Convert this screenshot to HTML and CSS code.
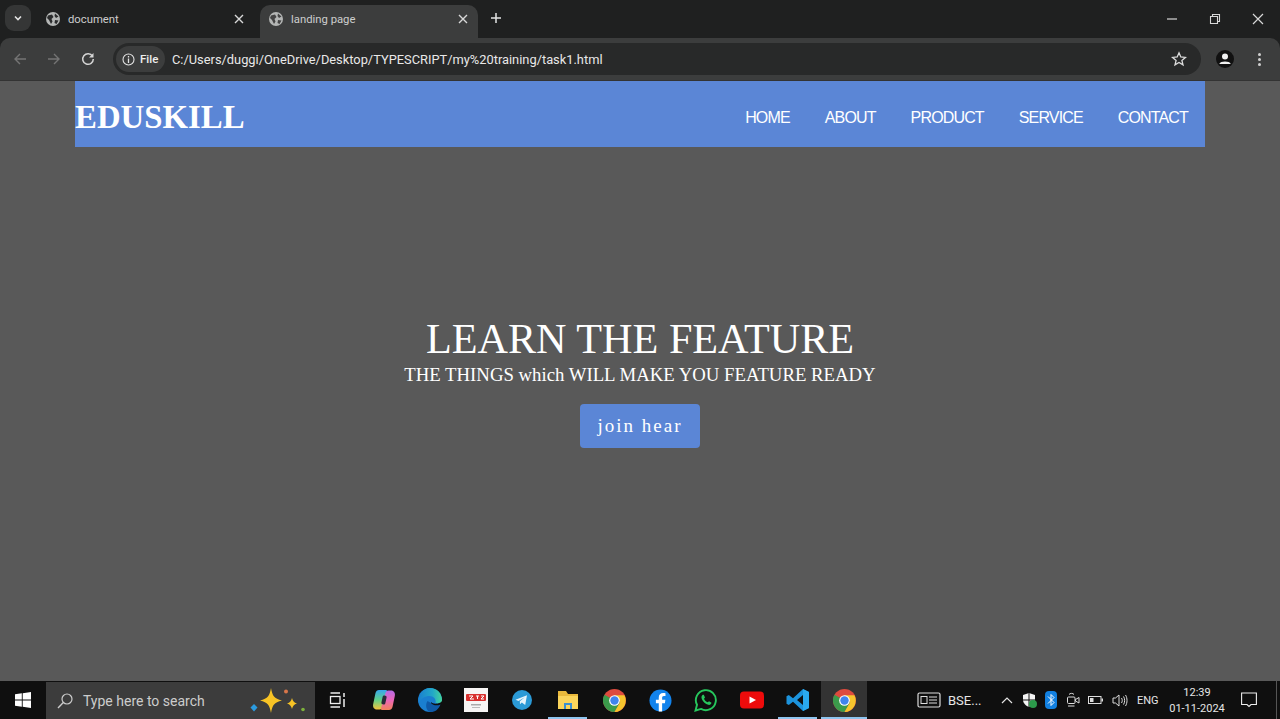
FILE: index.html
```html
<!DOCTYPE html>
<html lang="en">
<head>
  <meta charset="UTF-8" />
  <meta name="viewport" content="width=device-width, initial-scale=1.0" />
  <title>landing page</title>
  <link rel="stylesheet" href="styles.css">
</head>
<body>
  <div class="browser-top">
    <div class="tabstrip">
      <div class="tab-menu">
        <svg width="10" height="10" viewBox="0 0 10 10"><path d="M2 3.500 5 6.500 8 3.500" fill="none" stroke="#e3e3e3" stroke-width="1.600"/></svg>
      </div>
      <div class="tab">
        <svg class="globe" width="14" height="14" viewBox="0 0 14 14"><circle cx="7" cy="7" r="7" fill="#b4b6b5"/><path d="M2 3.500 6 2.500 7.500 5 5.500 7 6.500 9.500 5 12 3 8 1 6ZM9 1.500 12.500 4.500 10 6 8.500 4ZM9 8 12.500 8.500 10.500 12 8.500 11Z" fill="#2a2b2c"/></svg>
        <span class="tab-title">document</span>
        <svg class="tab-close" width="10" height="10" viewBox="0 0 10 10"><path d="M1 1 9 9M9 1 1 9" stroke="#d8d8d8" stroke-width="1.400"/></svg>
      </div>
      <div class="tab active">
        <svg class="globe" width="14" height="14" viewBox="0 0 14 14"><circle cx="7" cy="7" r="7" fill="#b4b6b5"/><path d="M2 3.500 6 2.500 7.500 5 5.500 7 6.500 9.500 5 12 3 8 1 6ZM9 1.500 12.500 4.500 10 6 8.500 4ZM9 8 12.500 8.500 10.500 12 8.500 11Z" fill="#444"/></svg>
        <span class="tab-title">landing page</span>
        <svg class="tab-close" width="10" height="10" viewBox="0 0 10 10"><path d="M1 1 9 9M9 1 1 9" stroke="#d8d8d8" stroke-width="1.400"/></svg>
      </div>
      <svg class="new-tab" width="12" height="12" viewBox="0 0 12 12"><path d="M6 1V11M1 6H11" stroke="#e3e3e3" stroke-width="1.500"/></svg>
      <div class="window-btns">
        <svg width="12" height="12" viewBox="0 0 12 12"><path d="M1 6H11" stroke="#d8d8d8" stroke-width="1.200"/></svg>
        <svg width="12" height="12" viewBox="0 0 12 12"><path d="M1.500 3.500H8.500V10.500H1.500ZM3.500 3.500V1.500H10.500V8.500H8.500" fill="none" stroke="#d8d8d8" stroke-width="1.100"/></svg>
        <svg width="12" height="12" viewBox="0 0 12 12"><path d="M1 1 11 11M11 1 1 11" stroke="#d8d8d8" stroke-width="1.200"/></svg>
      </div>
    </div>

    <div class="toolbar">
      <div class="nav-btns">
        <svg width="14" height="14" viewBox="0 0 14 14"><path d="M13 7H2M7 2 2 7 7 12" fill="none" stroke="#747474" stroke-width="1.400"/></svg>
        <svg width="14" height="14" viewBox="0 0 14 14"><path d="M1 7H12M7 2 12 7 7 12" fill="none" stroke="#747474" stroke-width="1.400"/></svg>
        <svg width="14" height="14" viewBox="0 0 14 14"><path d="M11.500 4.200A5.300 5.300 0 1 0 12.300 7" fill="none" stroke="#d5d5d5" stroke-width="1.500"/><path d="M12.500 1V5.500H8Z" fill="#d5d5d5"/></svg>
      </div>
      <div class="omnibox">
        <div class="file-chip">
          <svg width="13" height="13" viewBox="0 0 13 13"><circle cx="6.500" cy="6.500" r="5.500" fill="none" stroke="#e3e3e3" stroke-width="1.100"/><path d="M6.500 5.500V10M6.500 3V4.400" stroke="#e3e3e3" stroke-width="1.300"/></svg>
          <span>File</span>
        </div>
        <span class="url">C:/Users/duggi/OneDrive/Desktop/TYPESCRIPT/my%20training/task1.html</span>
        <svg class="star" width="16" height="16" viewBox="0 0 16 16"><path d="M8 1.800 9.800 6 14.400 6.400 10.900 9.400 12 13.900 8 11.500 4 13.900 5.100 9.400 1.600 6.400 6.200 6Z" fill="none" stroke="#dcdcdc" stroke-width="1.300"/></svg>
      </div>
      <div class="profile">
        <svg width="18" height="18" viewBox="0 0 18 18"><circle cx="9" cy="9" r="9" fill="#111"/><circle cx="9" cy="6.500" r="3" fill="#f1f1f1"/><path d="M3.500 13.500C4 10.800 14 10.800 14.500 13.500V14H3.500Z" fill="#f1f1f1"/></svg>
      </div>
      <div class="more-dots"><i></i><i></i><i></i></div>
    </div>
  </div>

  <div class="page">
    <nav class="navbar">
      <div class="logo">EDUSKILL</div>
      <ul class="nav-links">
        <li>HOME</li>
        <li>ABOUT</li>
        <li>PRODUCT</li>
        <li>SERVICE</li>
        <li>CONTACT</li>
      </ul>
    </nav>
    <section class="hero">
      <h1>LEARN THE FEATURE</h1>
      <p>THE THINGS which WILL MAKE YOU FEATURE READY</p>
      <button class="join-btn">join hear</button>
    </section>
  </div>

  <div class="taskbar">
    <div class="start">
      <svg width="16" height="16" viewBox="0 0 16 16"><path d="M0 2.300 6.800 1.300V7.500H0ZM7.700 1.200 16 0V7.500H7.700ZM0 8.400H6.800V14.700L0 13.700ZM7.700 8.400H16V16L7.700 14.800Z" fill="#fff"/></svg>
    </div>
    <div class="search">
      <svg width="18" height="18" viewBox="0 0 18 18"><circle cx="11" cy="7" r="5" fill="none" stroke="#ccc" stroke-width="1.200"/><path d="M7.300 10.500 2 16" stroke="#ccc" stroke-width="1.400"/></svg>
      <span>Type here to search</span>
      <svg class="sparkle" width="60" height="32" viewBox="0 0 60 32"><path d="M22 3C23.500 11 25 13.500 33 15.500 25 17.500 23.500 20 22 28 20.500 20 19 17.500 11 15.500 19 13.500 20.500 11 22 3Z" fill="#f7c325"/><path d="M43 13C43.800 16 45 17.700 48 18.500 45 19.300 43.800 21 43 24 42.200 21 41 19.300 38 18.500 41 17.700 42.200 16 43 13Z" fill="#f7c325"/><circle cx="37" cy="6.500" r="2" fill="#d9764a"/><circle cx="54" cy="24.500" r="1.800" fill="#7db13c"/><path d="M5 19 8.500 22.500 5 26.500 1.500 22.500Z" fill="#2b9be0"/></svg>
    </div>
    <div class="task-icons">
      <div class="task-icon">
        <svg width="18" height="18" viewBox="0 0 18 18"><path d="M1.500 2H11M1.500 16H11" stroke="#eee" stroke-width="1.300"/><rect x="1.500" y="5.500" width="9.500" height="7" fill="none" stroke="#eee" stroke-width="1.300"/><path d="M15 2V6M15 8V16" stroke="#eee" stroke-width="1.500"/></svg>
      </div>
      <div class="task-icon">
        <svg width="24" height="24" viewBox="0 0 24 24">
          <defs>
            <linearGradient id="copilot-left" x1="0" y1="0" x2="0" y2="1"><stop offset="0" stop-color="#38a6ee"/><stop offset="0.500" stop-color="#5fd08a"/><stop offset="1" stop-color="#f6c23a"/></linearGradient>
            <linearGradient id="copilot-right" x1="0" y1="0" x2="0" y2="1"><stop offset="0" stop-color="#b56ae6"/><stop offset="0.500" stop-color="#ec66b8"/><stop offset="1" stop-color="#f3815a"/></linearGradient>
          </defs>
          <path d="M7 2H14C15 2 15.500 3 15 4L10.500 19C10 21 8.500 21.500 7 21.500H5C2 21.500 .5 19 1.200 16L3.500 5C4 3 5.300 2 7 2Z" fill="url(#copilot-left)"/>
          <path d="M17 22H10C9 22 8.500 21 9 20L13.500 5C14 3 15.500 2.500 17 2.500H19C22 2.500 23.500 5 22.800 8L20.500 19C20 21 18.700 22 17 22Z" fill="url(#copilot-right)"/>
          <rect x="10" y="7.500" width="4" height="9" rx="1.500" fill="#2a2a38" transform="rotate(12 12 12)"/>
        </svg>
      </div>
      <div class="task-icon">
        <svg width="24" height="24" viewBox="0 0 24 24">
          <defs>
            <linearGradient id="edge-top" x1="0" y1="0.500" x2="1" y2="0.500"><stop offset="0" stop-color="#1a80d0"/><stop offset="0.600" stop-color="#22a8c8"/><stop offset="1" stop-color="#45d49a"/></linearGradient>
          </defs>
          <circle cx="12" cy="12" r="12" fill="#1a7fd0"/>
          <path d="M24 12.500C21 16.500 15 16.500 13 14L13 24 24 24Z" fill="#0f0f0f"/>
          <path d="M13 24C8 23.500 7 17 9.500 13L13 15C15 17.500 19 18 22.500 16.500 20.500 21.500 17 24 13 24Z" fill="#0f5aa8"/>
          <path d="M12 0C19 0 24 5.500 24 12C24 15 20 15.500 17.500 15 18.500 11 15.500 8 11.500 8 7 8 3 10.500 .5 15 0 7 5 0 12 0Z" fill="url(#edge-top)"/>
        </svg>
      </div>
      <div class="task-icon">
        <svg width="24" height="24" viewBox="0 0 24 24"><rect width="24" height="24" fill="#f7f5f4"/><rect x="2" y="6" width="20" height="7" rx="1" fill="#d8302e"/><path d="M5 8H9L6 11H10M12 8H15M13.500 8V11M17 8H20L17 11H20" fill="none" stroke="#fff" stroke-width="1"/><rect x="7" y="16" width="10" height="1.500" fill="#aaa"/><rect x="8" y="19" width="8" height="1" fill="#bbb"/></svg>
      </div>
      <div class="task-icon">
        <svg width="22" height="22" viewBox="0 0 22 22"><circle cx="11" cy="11" r="10" fill="#2b9ad6"/><path d="M4.500 10.800 16 6.300 14.200 16 10.800 13.500 9 15.200 8.800 12.300 13.800 8.300 7.500 11.900Z" fill="#e6f4fb"/></svg>
      </div>
      <div class="task-icon running">
        <svg width="22" height="20" viewBox="0 0 22 20"><path d="M1 1H9L11 4H21V8H1Z" fill="#e9b93c"/><rect x="1" y="6" width="20" height="13" fill="#fad45b"/><rect x="7" y="13" width="8" height="6" fill="#3b8ed0"/><rect x="9" y="15" width="4" height="4" fill="#fad45b"/></svg>
      </div>
      <div class="task-icon">
        <svg width="23" height="23" viewBox="0 0 24 24"><use href="#chrome-logo"/></svg>
      </div>
      <div class="task-icon">
        <svg width="23" height="23" viewBox="0 0 24 24"><circle cx="12" cy="12" r="11.500" fill="#1283ec"/><path d="M13.700 23.500V14.800H16.600L17.100 11.300H13.700V9.200C13.700 8.200 14.200 7.400 15.500 7.400H17.200V4.400C16.400 4.300 15.500 4.200 14.700 4.200 12 4.200 10.200 5.800 10.200 8.800V11.300H7.200V14.800H10.200V23.500Z" fill="#fff"/></svg>
      </div>
      <div class="task-icon">
        <svg width="24" height="24" viewBox="0 0 24 24"><path d="M1.500 22.500 3 16.800A10 10 0 1 1 7 20.900Z" fill="none" stroke="#27c75d" stroke-width="1.900"/><path d="M8.800 6.800C7.800 7.500 7 9 7.800 11 9 14 11.500 16 14.300 16.800 16 17.200 17.300 16 17.500 14.700L15 13.200 13.800 14.300C12 13.700 10.800 12.300 10 10.700L11 9.500 9.800 6.800Z" fill="#27c75d"/></svg>
      </div>
      <div class="task-icon">
        <svg width="24" height="18" viewBox="0 0 24 18"><rect width="24" height="17" y="0.500" rx="4" fill="#ee0b0b"/><path d="M9.500 5.500 16 9 9.500 12.500Z" fill="#fff"/></svg>
      </div>
      <div class="task-icon running">
        <svg width="24" height="24" viewBox="0 0 24 24"><path d="M17 1 23 4V20L17 23 7 13.700 2.800 17 .5 15.800V8.200L2.800 7 7 10.300ZM17 7 11 12 17 17Z" fill="#1c93dc"/><path d="M17 1 23 4V20L17 23Z" fill="#2aa9ee"/></svg>
      </div>
      <div class="task-icon active">
        <svg width="23" height="23" viewBox="0 0 24 24">
          <defs>
            <g id="chrome-logo">
              <circle cx="12" cy="12" r="12" fill="#dd4b3e"/>
              <path d="M12 12 1.600 6A12 12 0 0 0 12 24L18 13.600Z" fill="#3b9b4b"/>
              <path d="M12 6.500H22.400A12 12 0 0 1 12 24L18 13.600Z" fill="#f6c52d"/>
              <circle cx="12" cy="12" r="5.600" fill="#fff"/>
              <circle cx="12" cy="12" r="4.400" fill="#3f84ee"/>
            </g>
          </defs>
          <use href="#chrome-logo"/>
        </svg>
      </div>
    </div>
    <div class="news">
      <svg width="24" height="16" viewBox="0 0 24 16"><rect x="1" y="1" width="22" height="14" rx="1.500" fill="none" stroke="#ddd" stroke-width="1.200"/><rect x="4" y="4.500" width="6" height="7" fill="none" stroke="#ddd"/><path d="M12 5H20M12 8H20M12 11H20" stroke="#ddd"/></svg>
      <span>BSE...</span>
    </div>
    <div class="tray">
      <svg width="12" height="8" viewBox="0 0 12 8"><path d="M1 7 6 2 11 7" fill="none" stroke="#e5e5e5" stroke-width="1.200"/></svg>
      <svg width="15" height="16" viewBox="0 0 15 16"><path d="M1 3 7 1 13 3V8C13 11 10 14 7 15 4 14 1 11 1 8Z" fill="#f4f4f4"/><path d="M7 1V15M1 8H13" stroke="#111"/><circle cx="11" cy="12" r="4" fill="#2c9a4b"/></svg>
      <svg width="12" height="18" viewBox="0 0 12 18"><rect width="12" height="18" rx="4" fill="#1280e0"/><path d="M3 5.500 9 11.500 6 14.500V3.500L9 6.500 3 12.500" fill="none" stroke="#fff" stroke-width="1"/></svg>
      <svg width="14" height="16" viewBox="0 0 14 16"><rect x="1.500" y="5" width="7.500" height="6.500" rx="1" fill="none" stroke="#ddd"/><path d="M9.500 7.500 13 5.500V11L9.500 9ZM3 2.500C4 1 7 1 8 2.500M2 14H8.500" fill="none" stroke="#ddd"/></svg>
      <svg width="15" height="10" viewBox="0 0 15 10"><rect x="0.500" y="1.500" width="12.500" height="7" fill="none" stroke="#ddd"/><rect x="2" y="3" width="3.500" height="4" fill="#ddd"/><rect x="13.500" y="3.500" width="1.500" height="3" fill="#ddd"/></svg>
      <svg width="16" height="15" viewBox="0 0 16 15"><path d="M1 5H3.500L7 2V13L3.500 10H1Z" fill="none" stroke="#ddd"/><path d="M9.500 5C10.500 6.500 10.500 8.500 9.500 10M11.500 3.500C13 5.500 13 9.500 11.500 11.500M13.500 2C15.500 5 15.500 10 13.500 13" fill="none" stroke="#ddd"/></svg>
    </div>
    <span class="lang">ENG</span>
    <div class="clock"><span>12:39</span><span>01-11-2024</span></div>
    <div class="notify">
      <svg width="16" height="16" viewBox="0 0 16 16"><path d="M.6 1H15.400V12.500H10L8 14.500 6 12.500H.6Z" fill="none" stroke="#eee" stroke-width="1.100"/></svg>
    </div>
    <div class="show-desktop"></div>
  </div>
</body>
</html>
```

FILE: styles.css
```css
* {
  box-sizing: border-box;
}
html, body {
  margin: 0;
  height: 719px;
  overflow: hidden;
}
body {
  display: flex;
  flex-direction: column;
  font-family: Roboto, "Liberation Sans", sans-serif;
  background-color: #595959;
}
svg {
  display: block;
  flex: none;
}

/* browser tabs */
.browser-top {
  background-color: #1f2020;
}
.tabstrip {
  height: 38px;
  display: flex;
  align-items: flex-end;
  padding-left: 5px;
  color: #cdcdcd;
  font-size: 11.300px;
}
.tab-menu {
  width: 26px;
  height: 26px;
  margin-bottom: 7px;
  border-radius: 9px;
  background-color: #353636;
  display: flex;
  align-items: center;
  justify-content: center;
}
.tab {
  width: 226px;
  height: 33px;
  margin-left: 3px;
  padding: 0 16px 5px 12px;
  display: flex;
  align-items: center;
  border-radius: 10px 10px 0 0;
}
.tab.active {
  width: 218px;
  margin-left: 0;
  padding: 0 10px 5px 9px;
  background-color: #3c3d3d;
}
.tab-title {
  flex: 1;
  margin-left: 8px;
}
.new-tab {
  margin: 0 0 14px 12px;
}
.window-btns {
  margin-left: auto;
  height: 38px;
  display: flex;
  align-items: center;
  gap: 31px;
  padding: 0 16px 0 0;
}

/* address bar */
.toolbar {
  height: 43px;
  display: flex;
  align-items: center;
  background-color: #3c3d3d;
  border-bottom: 1px solid #333;
  border-radius: 10px 10px 0 0;
}
.nav-btns {
  display: flex;
  gap: 20px;
  padding-left: 13px;
  width: 113px;
}
.omnibox {
  width: 1088px;
  height: 32px;
  border-radius: 16px;
  background-color: #282929;
  display: flex;
  align-items: center;
  padding: 0 14px 0 3px;
}
.file-chip {
  width: 49px;
  height: 26px;
  border-radius: 13px;
  background-color: #3c3d3d;
  display: flex;
  align-items: center;
  gap: 5px;
  padding-left: 6px;
  color: #eee;
  font-size: 11.500px;
  font-weight: 500;
}
.url {
  margin-left: 7px;
  color: #e8e8e8;
  font-size: 12.850px;
  white-space: nowrap;
}
.star {
  margin-left: auto;
}
.profile {
  margin-left: 15px;
}
.more-dots {
  margin-left: 24px;
  display: flex;
  flex-direction: column;
  gap: 2px;
}
.more-dots i {
  width: 3px;
  height: 3px;
  border-radius: 50%;
  background-color: #d0d0d0;
}

/* the landing page */
.page {
  flex: 1;
  display: flex;
  flex-direction: column;
  padding: 0 75px;
  color: #fff;
  font-family: "Liberation Serif", serif;
}
.navbar {
  height: 66px;
  display: flex;
  align-items: center;
  justify-content: space-between;
  background-color: #5b86d6;
  padding: 7px 17px 0 0;
}
.logo {
  font-size: 32.800px;
  font-weight: bold;
}
.nav-links {
  list-style: none;
  display: flex;
  gap: 35px;
  margin: 0;
  padding: 0;
  font-family: "Liberation Sans", sans-serif;
  font-size: 16px;
  letter-spacing: -0.85px;
}
.hero {
  display: flex;
  flex-direction: column;
  align-items: center;
  padding-top: 168px;
}
.hero h1 {
  margin: 0;
  font-size: 42.200px;
  font-weight: normal;
  line-height: 48px;
}
.hero p {
  margin: 1px 0 0;
  font-size: 18.750px;
  line-height: 22px;
}
.join-btn {
  width: 120px;
  height: 44px;
  margin-top: 18px;
  border: none;
  border-radius: 4px;
  background-color: #5b86d6;
  color: #fff;
  font-family: "Liberation Serif", serif;
  font-size: 19px;
  letter-spacing: 2px;
}

/* windows taskbar */
.taskbar {
  height: 38px;
  display: flex;
  align-items: center;
  background-color: #0f0f0f;
  color: #e6e6e6;
}
.start {
  width: 46px;
  padding-left: 15px;
}
.search {
  width: 269px;
  height: 37px;
  margin-top: 1px;
  display: flex;
  align-items: center;
  background-color: #3c3c3c;
  padding-left: 10px;
  color: #ccc;
  font-size: 14px;
}
.search span {
  margin-left: 9px;
}
.sparkle {
  margin-left: auto;
  margin-right: 6px;
}
.task-icons {
  display: flex;
  height: 38px;
  width: 554px;
}
.task-icon {
  width: 46px;
  height: 38px;
  display: flex;
  align-items: center;
  justify-content: center;
  border-bottom: 2px solid transparent;
  padding-top: 2px;
}
.task-icon.running {
  border-image: linear-gradient(to right, transparent 4px, #8ec4ee 4px, #8ec4ee 41px, transparent 41px) 1;
}
.task-icon.active {
  background-color: #333;
  border-bottom-color: #8ec4ee;
}
.news {
  width: 103px;
  margin-left: 48px;
  display: flex;
  align-items: center;
  gap: 7px;
  font-size: 13px;
}
.tray {
  width: 127px;
  margin-left: -19px;
  display: flex;
  align-items: center;
  justify-content: space-between;
}
.lang {
  width: 22px;
  margin-left: 9px;
  font-size: 11px;
}
.clock {
  width: 56px;
  margin-left: 10px;
  display: flex;
  flex-direction: column;
  align-items: center;
  gap: 3px;
  font-size: 11px;
  white-space: nowrap;
}
.notify {
  margin-left: 16px;
}
.show-desktop {
  width: 1px;
  height: 38px;
  margin-left: 19px;
  background-color: #555;
}
```
